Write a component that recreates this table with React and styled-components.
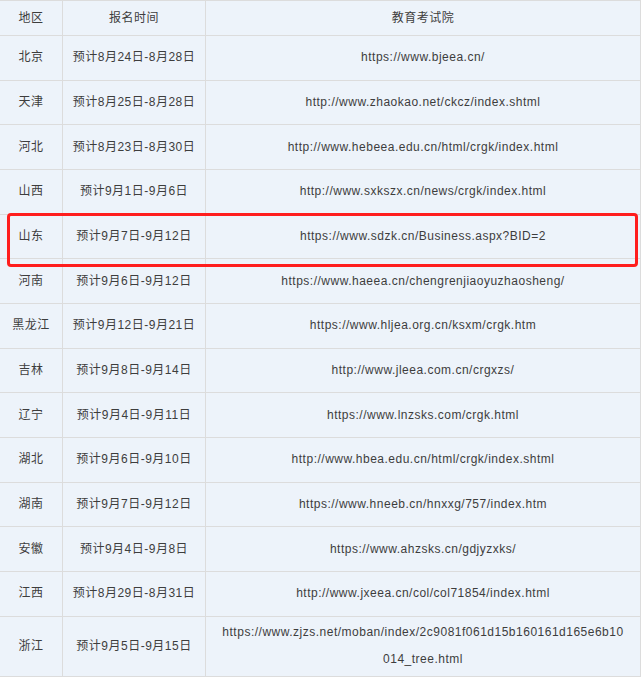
import React from "react";
import styled, { createGlobalStyle, css } from "styled-components";

const GlobalStyle = createGlobalStyle`
  html, body {
    margin: 0;
    padding: 0;
    background: #ffffff;
  }
  body {
    font-family: "Liberation Sans", "Noto Sans CJK SC", sans-serif;
  }
`;

const Wrap = styled.div`
  position: relative;
  width: 644px;
  overflow: hidden;
`;

const Table = styled.table`
  border-collapse: collapse;
  table-layout: fixed;
  width: 642px;
  margin-left: -1px;
  background: #edf3fa;
  color: #3d3d3d;
  font-size: 12px;
  letter-spacing: 0.5px;
`;

const Col = styled.col`
  width: ${(p) => p.$w || "auto"};
`;

const cellBase = css`
  border: 1px solid #dcdcdc;
  text-align: center;
  vertical-align: middle;
  line-height: 27px;
`;

const HeadCell = styled.th`
  ${cellBase}
  font-weight: normal;
  height: 34px;
  padding: 0 4px;
`;

const Cell = styled.td`
  ${cellBase}
  height: 38.67px;
  padding: ${(p) => (p.$wide ? "2.5px 13px" : "2.5px 2px")};
  white-space: ${(p) => (p.$wide ? "normal" : "nowrap")};
  word-break: break-all;
`;

const Highlight = styled.div`
  position: absolute;
  left: 7px;
  top: 213px;
  width: 625px;
  height: 48px;
  border: 3px solid #ff1d1d;
  border-radius: 4px;
  pointer-events: none;
`;

const rows = [
  ["北京", "预计8月24日-8月28日", "https://www.bjeea.cn/"],
  ["天津", "预计8月25日-8月28日", "http://www.zhaokao.net/ckcz/index.shtml"],
  ["河北", "预计8月23日-8月30日", "http://www.hebeea.edu.cn/html/crgk/index.html"],
  ["山西", "预计9月1日-9月6日", "http://www.sxkszx.cn/news/crgk/index.html"],
  ["山东", "预计9月7日-9月12日", "https://www.sdzk.cn/Business.aspx?BID=2"],
  ["河南", "预计9月6日-9月12日", "https://www.haeea.cn/chengrenjiaoyuzhaosheng/"],
  ["黑龙江", "预计9月12日-9月21日", "https://www.hljea.org.cn/ksxm/crgk.htm"],
  ["吉林", "预计9月8日-9月14日", "http://www.jleea.com.cn/crgxzs/"],
  ["辽宁", "预计9月4日-9月11日", "https://www.lnzsks.com/crgk.html"],
  ["湖北", "预计9月6日-9月10日", "http://www.hbea.edu.cn/html/crgk/index.shtml"],
  ["湖南", "预计9月7日-9月12日", "https://www.hneeb.cn/hnxxg/757/index.htm"],
  ["安徽", "预计9月4日-9月8日", "https://www.ahzsks.cn/gdjyzxks/"],
  ["江西", "预计8月29日-8月31日", "http://www.jxeea.cn/col/col71854/index.html"],
  [
    "浙江",
    "预计9月5日-9月15日",
    "https://www.zjzs.net/moban/index/2c9081f061d15b160161d165e6b10014_tree.html",
  ],
];

export default function App() {
  return (
    <Wrap>
      <GlobalStyle />
      <Table>
        <colgroup>
          <Col $w="63px" />
          <Col $w="143px" />
          <Col />
        </colgroup>
        <thead>
          <tr>
            <HeadCell>地区</HeadCell>
            <HeadCell>报名时间</HeadCell>
            <HeadCell>教育考试院</HeadCell>
          </tr>
        </thead>
        <tbody>
          {rows.map((r) => (
            <tr key={r[0]}>
              <Cell>{r[0]}</Cell>
              <Cell>{r[1]}</Cell>
              <Cell $wide>{r[2]}</Cell>
            </tr>
          ))}
        </tbody>
      </Table>
      {/* 山东 row marker */}
      <Highlight />
    </Wrap>
  );
}
